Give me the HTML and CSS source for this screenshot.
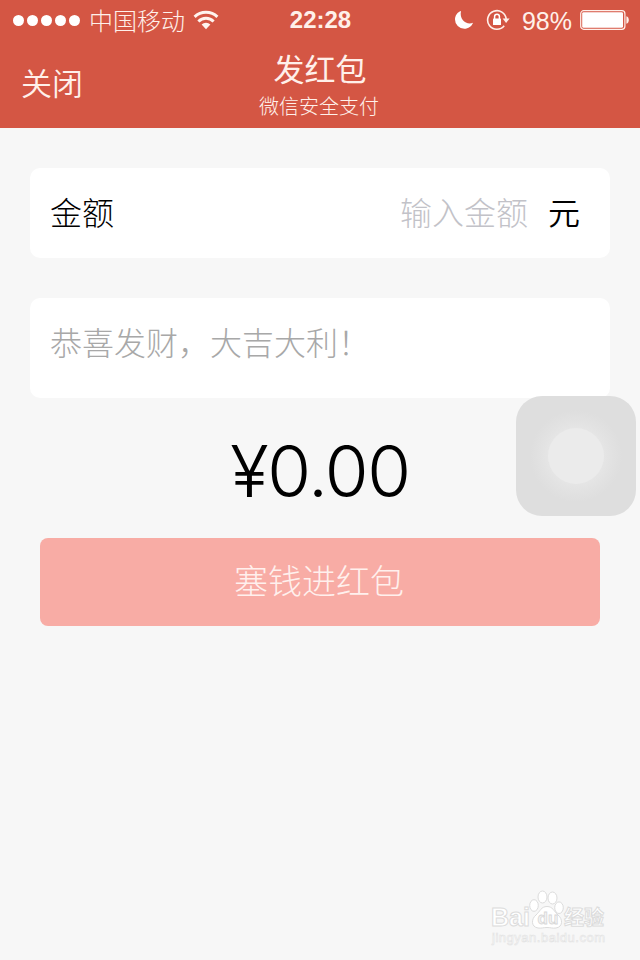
FILE: index.html
```html
<!DOCTYPE html>
<html lang="zh-CN">
<head>
    <meta charset="UTF-8">
    <meta name="viewport" content="width=device-width, initial-scale=1.0">
    <title>发红包</title>
    <link rel="stylesheet" href="styles.css">
</head>
<body>
    <header class="header">
        <div class="status-bar">
            <div class="status-left">
                <div class="signal">
                    <i></i><i></i><i></i><i></i><i></i>
                </div>
                <span class="carrier">中国移动</span>
                <svg class="wifi" width="26" height="20" viewBox="0 0 26 20">
                    <g fill="none" stroke="#fff3ee" stroke-width="3">
                        <path d="M1.6 6.9a16.4 16.4 0 0 1 22.8 0"/>
                        <path d="M5.4 11.5a10.8 10.8 0 0 1 15.2 0"/>
                    </g>
                    <path d="M8.6 14.6a6.2 6.2 0 0 1 8.8 0L13 19.2z" fill="#fff3ee"/>
                </svg>
            </div>
            <span class="time">22:28</span>
            <div class="status-right">
                <svg class="moon" width="20" height="20" viewBox="0 0 20 20">
                    <path d="M7 1C3.500 2 1 5.500 1 9.500a9.300 9.300 0 0 0 9.300 9.300c4 0 7.500-2.500 8.700-6C13 15.500 5 10 7 1z" fill="#fff"/>
                </svg>
                <svg class="lock" width="24" height="22" viewBox="0 0 24 22">
                    <path d="M18.2 16.8A9.3 9.3 0 1 1 20.2 10.2" fill="none" stroke="#fff0ea" stroke-width="1.6"/>
                    <path d="M16.6 9.6h7L20.1 14z" fill="#fff0ea"/>
                    <rect x="7" y="9.6" width="8" height="6.4" rx=".6" fill="#fff"/>
                    <path d="M8.6 10V7.6a2.400 2.400 0 0 1 4.800 0V10" fill="none" stroke="#fff" stroke-width="1.5"/>
                </svg>
                <span class="percent">98%</span>
                <svg class="battery" width="50" height="20" viewBox="0 0 50 20">
                    <rect x=".7" y=".7" width="44.2" height="18.6" rx="3" fill="none" stroke="#fff0ea" stroke-width="1.2"/>
                    <rect x="2.2" y="2.2" width="40.800" height="15.600" rx="1.4" fill="#fff"/>
                    <path d="M46.400 6.200c3.200.6 3.200 7 0 7.600z" fill="#fff0ea"/>
                </svg>
            </div>
        </div>
        <nav class="nav">
            <a class="close">关闭</a>
            <div class="title">
                <h1>发红包</h1>
                <p>微信安全支付</p>
            </div>
        </nav>
    </header>

    <main class="content">
        <div class="card amount-card">
            <span class="label">金额</span>
            <span class="placeholder">输入金额</span>
            <span class="unit">元</span>
        </div>
        <div class="card message-card">恭喜发财，大吉大利！</div>
        <div class="total">¥0.00</div>
        <button class="submit">塞钱进红包</button>
    </main>

    <!-- AssistiveTouch -->
    <div class="assistive"><span></span></div>

    <svg class="watermark" width="130" height="64" viewBox="0 0 130 64">
        <g fill="#fff" stroke="#dcdcdc" stroke-width="1">
            <text class="wm-logo" x="5" y="41" textLength="39" lengthAdjust="spacingAndGlyphs">Bai</text>
            <ellipse cx="48" cy="20.5" rx="4.3" ry="5.8"/>
            <ellipse cx="56.5" cy="12" rx="4.5" ry="6"/>
            <ellipse cx="66.5" cy="13" rx="4.5" ry="6"/>
            <ellipse cx="73" cy="22.7" rx="4.3" ry="5.8"/>
            <path d="M61 21.5c6 0 7 5 11 8.5 5 4 5 12-2 13-4 .5-5-.5-9-.5s-5 1-9 .5c-7-1-7-9-2-13 4-3.500 5-8.500 11-8.500z"/>
            <text class="wm-cn" x="78" y="40">经验</text>
        </g>
        <text class="wm-du" x="51.5" y="39">du</text>
        <text class="wm-url" x="6" y="57" textLength="113">jingyan.baidu.com</text>
    </svg>
</body>
</html>
```
FILE: styles.css
```css
* {
    box-sizing: border-box;
}

body {
    width: 640px;
    height: 960px;
    margin: 0;
    overflow: hidden;
    position: relative;
    background: #f7f7f7;
    font-family: "Noto Sans CJK SC", sans-serif;
    font-weight: 350;
    color: #000;
}

.header {
    height: 128px;
    background: #d45644;
    color: #fff0ea;
}

.status-bar {
    display: grid;
    grid-template-columns: 1fr auto 1fr;
    align-items: center;
    height: 40px;
    padding: 0 10px 0 13px;
}

.status-left,
.status-right {
    display: flex;
    align-items: center;
}

.status-right {
    justify-content: flex-end;
}

.signal {
    display: flex;
    gap: 3px;
}

.signal i {
    width: 11px;
    height: 11px;
    border-radius: 50%;
    background: #fff;
}

.carrier {
    margin-left: 9px;
    font-size: 24px;
    font-weight: 300;
    line-height: 40px;
}

.wifi {
    margin-left: 8px;
}

.time {
    margin-right: 2px;
    font-family: "Liberation Sans", Arial, sans-serif;
    font-size: 24px;
    font-weight: bold;
}

.lock {
    margin-left: 12px;
}

.percent {
    margin: 2px 8px 0 12px;
    font-family: "Liberation Sans", Arial, sans-serif;
    font-size: 25px;
}

.nav {
    display: grid;
    grid-template-columns: 1fr auto 1fr;
    height: 88px;
    padding: 0 21px;
}

.close {
    font-size: 31px;
    line-height: 84px;
}

.title {
    text-align: center;
}

.title h1 {
    margin: 8px 0 0;
    font-size: 31px;
    font-weight: 400;
    line-height: 40px;
}

.title p {
    margin: 6px 2px 0 0;
    font-size: 20px;
    font-weight: 300;
    line-height: 24px;
}

.content {
    display: flex;
    flex-direction: column;
    padding: 40px 30px 0;
}

.card {
    display: flex;
    padding: 0 30px 0 20px;
    border-radius: 10px;
    background: #fff;
    font-size: 32px;
    font-weight: 300;
    line-height: 86px;
}

.amount-card {
    height: 90px;
}

.placeholder {
    margin-left: auto;
    color: #c2c2c8;
}

.unit {
    margin-left: 20px;
    font-weight: 350;
}

.message-card {
    height: 100px;
    margin-top: 40px;
    color: #a8a8a8;
}

.total {
    height: 140px;
    font-family: Inter, sans-serif;
    font-size: 71px;
    font-weight: 300;
    letter-spacing: -1.4px;
    line-height: 146px;
    text-align: center;
}

.submit {
    height: 88px;
    margin: 0 10px;
    padding: 0 2px 6px 0;
    border: none;
    border-radius: 8px;
    background: #f8aca5;
    color: #fff0ed;
    font-family: inherit;
    font-size: 34px;
    font-weight: 300;
}

.assistive {
    position: absolute;
    left: 516px;
    top: 396px;
    display: grid;
    place-items: center;
    width: 120px;
    height: 120px;
    border-radius: 26px;
    background: radial-gradient(circle, #e5e5e5 28px, #e2e2e2 35px, #dedede 46px);
}

.assistive span {
    width: 56px;
    height: 56px;
    border-radius: 50%;
    background: #ebebeb;
}

.watermark {
    position: absolute;
    left: 486px;
    top: 885px;
}

.wm-logo {
    font: bold 26px "Liberation Sans", sans-serif;
}

.wm-du {
    font: bold 17px "Liberation Sans", sans-serif;
    fill: #f4f4f4;
    stroke: #d8d8d8;
    stroke-width: 0.8px;
}

.wm-cn {
    font: bold 20px "Noto Sans CJK SC", sans-serif;
}

.wm-url {
    font: 13px "Liberation Sans", sans-serif;
    fill: #fff;
    stroke: #e2e2e2;
    stroke-width: 0.6px;
}
```
